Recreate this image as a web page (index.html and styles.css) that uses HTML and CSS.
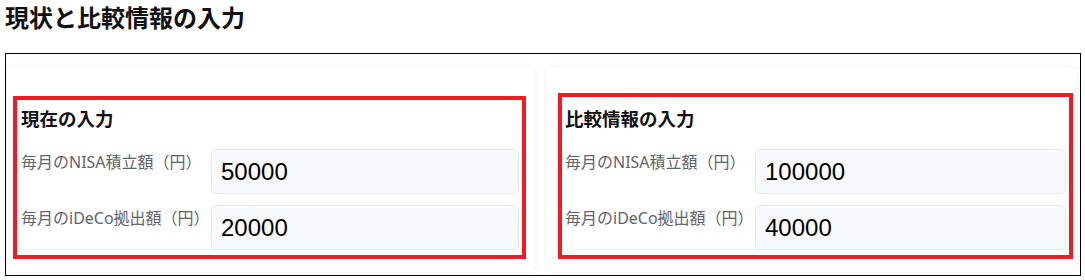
FILE: index.html
```html
<!DOCTYPE html>
<html lang="ja">

<head>
    <meta charset="UTF-8">
    <meta name="viewport" content="width=device-width, initial-scale=1.0">
    <link rel="stylesheet" href="styles.css">
</head>

<body>

    <h2 class="page-title">現状と比較情報の入力</h2>

    <div class="frame">
        <div class="columns">

            <section class="card card-left">
                <div class="mark mark-left">
                    <h3 class="card-title">現在の入力</h3>
                    <div class="field">
                        <label class="field-label">毎月のNISA積立額（円）</label>
                        <input class="field-input" type="text" value="50000">
                    </div>
                    <div class="field">
                        <label class="field-label">毎月のiDeCo拠出額（円）</label>
                        <input class="field-input" type="text" value="20000">
                    </div>
                </div>
            </section>

            <section class="card card-right">
                <div class="mark mark-right">
                    <h3 class="card-title">比較情報の入力</h3>
                    <div class="field">
                        <label class="field-label">毎月のNISA積立額（円）</label>
                        <input class="field-input" type="text" value="100000">
                    </div>
                    <div class="field">
                        <label class="field-label">毎月のiDeCo拠出額（円）</label>
                        <input class="field-input" type="text" value="40000">
                    </div>
                </div>
            </section>

        </div>
    </div>

</body>

</html>
```

FILE: styles.css
```css
body {
    margin: 0;
    background: #ffffff;
    font-family: "Noto Sans", "Noto Sans CJK JP", sans-serif;
    color: #111111;
}

.page-title {
    margin: 2px 0 19px 5px;
    font-size: 24px;
    line-height: 32px;
    font-weight: 700;
}

.frame {
    margin-left: 5px;
    width: 1074px;
    height: 208px;
    border: 1px solid #000000;
    padding-top: 13px;
    box-sizing: content-box;
}

.columns {
    display: grid;
    grid-template-columns: 528px 531px;
    column-gap: 11px;
    padding-left: 1px;
    height: 205px;
}

.card {
    background: #ffffff;
    border-radius: 8px;
    box-shadow: 0 0 6px rgba(0, 0, 0, 0.07);
}

.mark {
    border: 4px solid #ed1c24;
    padding: 5px 3px 5px 4px;
}

.mark-left {
    margin: 29px 9px 0 6px;
}

.mark-right {
    margin: 26px 4px 0 12px;
    padding-top: 8px;
    padding-left: 3px;
}

.card-title {
    margin: 0 0 17px;
    font-size: 18.5px;
    line-height: 27px;
    font-weight: 700;
    color: #111111;
}

.field {
    display: grid;
    grid-template-columns: 190px minmax(0, 1fr);
    align-items: start;
}

.field + .field {
    margin-top: 11px;
}

.field-label {
    margin-top: 1px;
    font-size: 16px;
    line-height: 24px;
    color: #62636a;
}

.field-input {
    width: 100%;
    min-width: 0;
    height: 45px;
    box-sizing: border-box;
    border: 1px solid #e3e8ef;
    border-radius: 6px;
    background: #f8fafd;
    padding: 0 9px;
    font-family: "Liberation Sans", Arial, sans-serif;
    font-size: 24px;
    color: #000000;
    outline: none;
}
```
